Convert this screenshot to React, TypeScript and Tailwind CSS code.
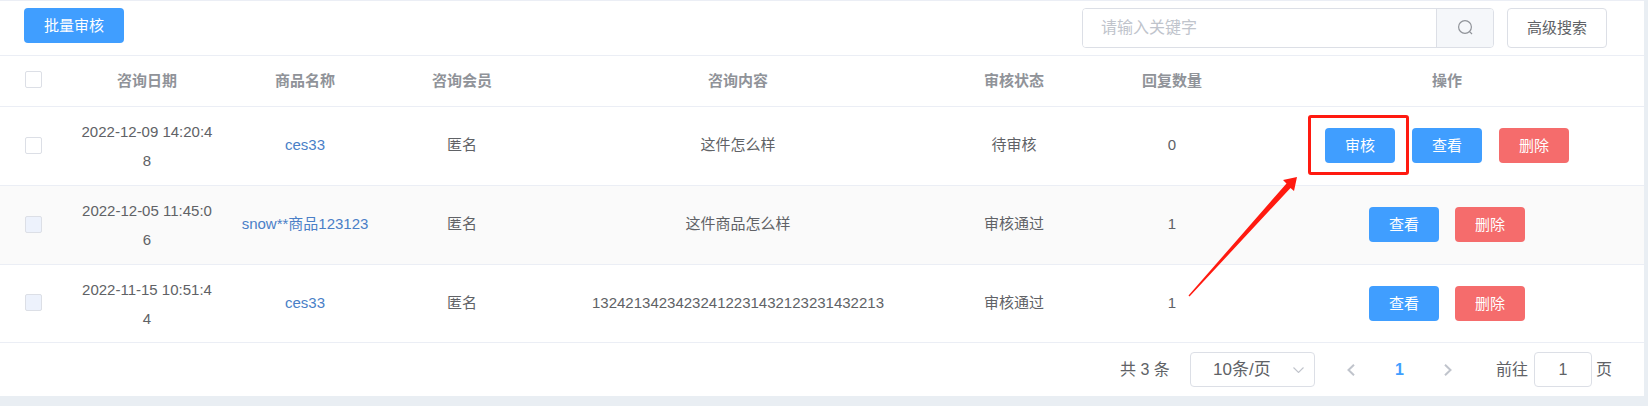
import React from "react";

const GRID = "grid grid-cols-[66px_162px_154px_160px_392px_160px_156px_394px]";
const FONT = { fontFamily: '"Liberation Sans","Noto Sans CJK SC",sans-serif' };

function Checkbox({ disabled }: { disabled?: boolean }) {
  return (
    <span
      className={
        "block w-[17px] h-[17px] rounded-[2px] border border-[#dcdfe6] " +
        (disabled ? "bg-[#edf2fc]" : "bg-white")
      }
    />
  );
}

function ActionButton({ label, danger }: { label: string; danger?: boolean }) {
  return (
    <button
      className={
        "w-[70px] h-[35px] rounded-[4px] text-white text-[15px] leading-none " +
        (danger ? "bg-[#f56c6c]" : "bg-[#409eff]")
      }
    >
      {label}
    </button>
  );
}

const rows = [
  { date: "2022-12-09 14:20:48", name: "ces33", content: "这件怎么样", status: "待审核", replies: "0", audit: true, disabled: false, striped: false, h: "h-[79px]", cell: "pb-[2px]" },
  { date: "2022-12-05 11:45:06", name: "snow**商品123123", content: "这件商品怎么样", status: "审核通过", replies: "1", audit: false, disabled: true, striped: true, h: "h-[79px]", cell: "pb-[2px]" },
  { date: "2022-11-15 10:51:44", name: "ces33", content: "13242134234232412231432123231432213", status: "审核通过", replies: "1", audit: false, disabled: true, striped: false, h: "h-[78px]", cell: "pb-0" },
];

export default function App() {
  return (
    <div className="relative w-[1648px] h-[406px] bg-[#e9eef3] overflow-hidden text-[15px] text-[#606266]" style={FONT}>
      <div className="w-[1644px] h-[396px] flex flex-col">
        <div className="h-px bg-[#ebeef5] shrink-0" />
        <div className="bg-white h-[55px] shrink-0 border-b border-[#ebeef5] flex items-start justify-between pt-[7px] pl-6 pr-[37px]">
          <button className="w-[100px] h-[35px] rounded-[4px] bg-[#409eff] text-white text-[15px] leading-none">批量审核</button>
          <div className="flex items-center gap-[13px]">
            <div className="flex w-[412px] h-[40px] rounded-[4px] border border-[#dcdfe6] overflow-hidden">
              <div className="flex-1 bg-white pl-[18px] text-[16px] leading-[38px] text-[#c0c4cc]">请输入关键字</div>
              <div className="w-[57px] bg-[#f5f7fa] border-l border-[#dcdfe6] flex items-center justify-center pb-[2px]">
                <svg width="17" height="17" viewBox="0 0 17 17" fill="none" stroke="#909399" strokeWidth="1.2">
                  <circle cx="8" cy="8" r="6.4" />
                  <path d="M12.6 12.6 L15 15" />
                </svg>
              </div>
            </div>
            <button className="w-[100px] h-[40px] rounded-[4px] border border-[#dcdfe6] bg-white text-[15px] text-[#606266]">高级搜索</button>
          </div>
        </div>

        <div className={GRID + " bg-white h-[51px] shrink-0 border-b border-[#ebeef5] items-center text-center font-bold text-[#909399]"}>
          <div className="flex justify-start pl-[25px] pb-[3px]"><Checkbox /></div>
          <div>咨询日期</div>
          <div>商品名称</div>
          <div>咨询会员</div>
          <div>咨询内容</div>
          <div>审核状态</div>
          <div>回复数量</div>
          <div>操作</div>
        </div>

        {rows.map((r, i) => (
          <div key={i} className={GRID + " shrink-0 border-b border-[#ebeef5] items-center text-center " + r.h + " " + (r.striped ? "bg-[#fafafa]" : "bg-white")}>
            <div className="flex justify-start pl-[25px] pb-[2px]"><Checkbox disabled={r.disabled} /></div>
            <div className="px-[14px] leading-[29px] break-all">{r.date}</div>
            <div className={"text-[#4a7fc7] " + r.cell}>{r.name}</div>
            <div className={r.cell}>匿名</div>
            <div className={r.cell}>{r.content}</div>
            <div className={r.cell}>{r.status}</div>
            <div className={r.cell}>{r.replies}</div>
            <div className={"flex justify-center pb-px " + (r.audit ? "gap-[17px]" : "gap-4")}>
              {r.audit && <ActionButton label="审核" />}
              <ActionButton label="查看" />
              <ActionButton label="删除" danger />
            </div>
          </div>
        ))}

        <div className="bg-white flex-1 flex items-start pt-[9px] pl-[1120px] text-[16px]">
          <span className="w-[70px] leading-[35px]">共 3 条</span>
          <div className="w-[125px] h-[35px] rounded-[4px] border border-[#dcdfe6] flex items-center pl-[22px] pr-[10px] justify-between">
            <span className="text-[17px]">10条/页</span>
            <svg width="11" height="6" viewBox="0 0 11 6" fill="none" stroke="#c0c4cc" strokeWidth="1.1"><path d="M0.5 0.5 L5.5 5.5 L10.5 0.5" /></svg>
          </div>
          <div className="w-[181px] h-[35px] flex items-center pl-[32px]">
            <svg width="8" height="12" viewBox="0 0 8 12" fill="none" stroke="#c0c4cc" strokeWidth="2"><path d="M7 0.7 L1.5 6 L7 11.3" /></svg>
            <span className="w-[89px] text-center text-[#409eff] font-bold">1</span>
            <svg width="8" height="12" viewBox="0 0 8 12" fill="none" stroke="#c0c4cc" strokeWidth="2"><path d="M1 0.7 L6.5 6 L1 11.3" /></svg>
          </div>
          <span className="leading-[35px] w-[38px]">前往</span>
          <div className="w-[58px] h-[35px] rounded-[4px] border border-[#dcdfe6] flex items-center justify-center">1</div>
          <span className="leading-[35px] ml-[4px]">页</span>
        </div>
      </div>

      <div className="absolute left-[1308px] top-[115px] w-[101px] h-[60px] border-[3px] border-[#ff1a10] rounded-[3px]" />
      <svg className="absolute left-0 top-0 pointer-events-none" width="1648" height="406">
        <polygon points="1297,177 1283,180 1286.5,183.5 1188.5,295.5 1189.5,296.5 1290.5,188 1294,191" fill="#ff1a10" />
      </svg>
    </div>
  );
}
